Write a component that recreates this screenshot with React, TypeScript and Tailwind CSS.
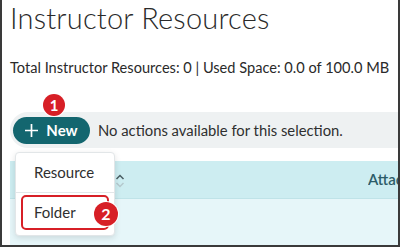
import React from "react";

export default function App() {
  return (
    <div className="w-[400px] h-[247px] overflow-hidden bg-white border-x-2 border-b-2 border-[#3a3a3a] relative" style={{ fontFamily: "Lato, 'Noto Sans', sans-serif" }}>
      <div className="pl-[8px] pt-[1px]">
        <h1 className="text-[29px] leading-[34px] font-light text-[#2a2a2a] tracking-[0.2px]">Instructor Resources</h1>
        <p className="mt-[24px] text-[14.6px] leading-[18px] text-[#2a2a2a]">Total Instructor Resources: 0 | Used Space: 0.0 of 100.0 MB</p>
      </div>
      <div className="mt-[35px] ml-[8px] h-[36px] bg-[#eef1f2] rounded-l-full flex items-center pl-[3px] relative">
        <button className="h-[27px] w-[77px] rounded-full bg-[#13666f] text-white flex items-center justify-center gap-[8px] text-[15px] font-bold">
          <svg width="13" height="13" viewBox="0 0 13 13"><path d="M6.5 0v13M0 6.5h13" stroke="white" strokeWidth="1.7" /></svg>
          <span>New</span>
        </button>
        <span className="ml-[8px] text-[14.8px] text-[#2f2f2f]">No actions available for this selection.</span>
        <div className="absolute left-[33px] top-[-18px] w-[22px] h-[22px] rounded-full bg-[#d71f26] ring-1 ring-white text-white text-[15px] font-bold flex items-center justify-center">1</div>
      </div>
      <div className="mt-[13px] ml-[8px] flex flex-col">
        <div className="h-[38px] bg-[#cdedf1] border-b border-[#bfe3e8] flex items-center pl-[105px]">
          <svg width="10" height="14" viewBox="0 0 10 14" className="mt-[2px]"><path d="M1.5 5l3.5-3.5 3.5 3.5" stroke="#4a5e63" strokeWidth="1.5" fill="none" /><path d="M1.5 9l3.5 3.5 3.5-3.5" stroke="#b5c9cd" strokeWidth="1.5" fill="none" /></svg>
          <span className="ml-auto text-[15px] font-semibold text-[#2c5c68] w-[30px] overflow-hidden whitespace-nowrap">Attac</span>
        </div>
        <div className="h-[50px] bg-[#e6f6f9]" />
      </div>
      <div className="absolute left-[13px] top-[152px] w-[100px] h-[84px] bg-white rounded-[4px] border border-[#e2e6e8] shadow-[0_2px_6px_rgba(0,0,0,0.12)] flex flex-col">
        <div className="h-[40px] border-b border-[#e3e7e9] flex items-center pl-[18px] text-[15px] text-[#2f2f2f]">Resource</div>
        <div className="mx-[5px] mt-[2px] h-[35px] border-2 border-[#d71f26] rounded-[5px] flex items-center pl-[11px] text-[15px] text-[#2f2f2f]">Folder</div>
      </div>
      <div className="absolute left-[92px] top-[202px] w-[24px] h-[24px] rounded-full bg-[#d71f26] ring-1 ring-white text-white text-[16px] font-bold flex items-center justify-center">2</div>
    </div>
  );
}
